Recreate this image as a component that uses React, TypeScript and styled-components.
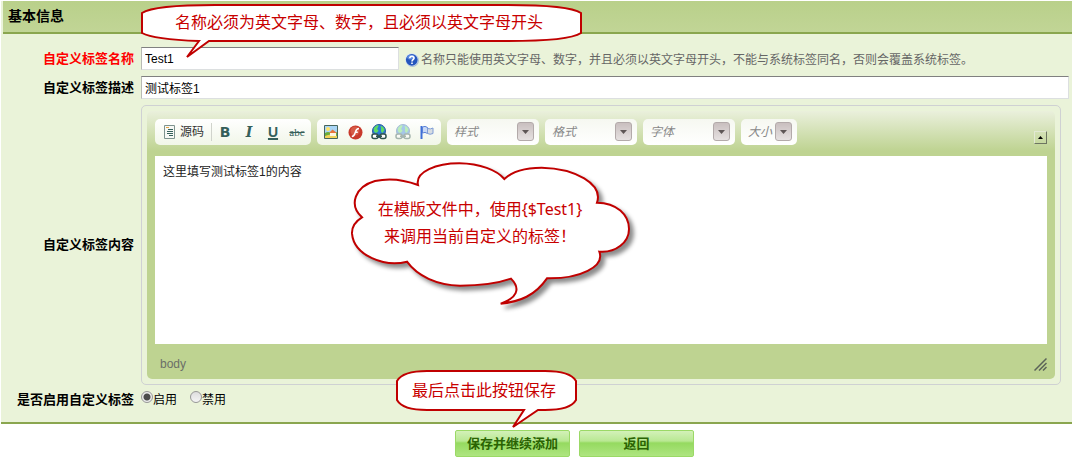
import React from 'react';
import styled, { createGlobalStyle, css } from 'styled-components';

const sans = '"Liberation Sans", "Noto Sans CJK SC", sans-serif';

const GlobalStyle = createGlobalStyle`
  * { box-sizing: border-box; }
  body { margin: 0; background: #fff; font: 12px/18px ${sans}; color: #000; }
  button, input, select, textarea { font: inherit; color: inherit; margin: 0; }
`;

const Page = styled.form`
  padding: 1px 0 7px 1px;
`;

const Panel = styled.section`
  background: #eaf3d9;
  border-bottom: 2px solid #8aa64f;
`;

const PanelHeader = styled.h1`
  margin: 0 0 0 2px;
  padding: 0 5px;
  font-size: 14px;
  line-height: 31px;
  background: linear-gradient(#b9d08a, #c1d596);
  border-bottom: 2px solid #8aa64f;
`;

const Fields = styled.div`
  display: grid;
  grid-template-columns: 133px minmax(0, 1fr);
  gap: 6px 7px;
  padding: 13px 3px 13px 0;
`;

const FieldName = styled.label<{ $required?: boolean }>`
  align-self: center;
  text-align: right;
  font-size: 13px;
  font-weight: bold;
  color: ${p => (p.$required ? '#f00' : '#000')};
`;

const NameCell = styled.div`
  position: relative;
  display: flex;
  align-items: center;
  gap: 6px;
`;

const TextInput = styled.input<{ $short?: boolean }>`
  width: ${p => (p.$short ? '258px' : '100%')};
  height: 23px;
  padding: 0 3px;
  background: #fff;
  border: 1px solid #dcdfe0;
  border-top-color: #808080;
  border-left-color: #b8bab4;
  outline: none;
`;

const Hint = styled.span`
  display: flex;
  align-items: center;
  gap: 2px;
  color: #666;
  padding-top: 2px;
`;

const Editor = styled.div`
  margin-right: 8px;
  padding: 5px;
  border: 1px solid #cfd1d3;
  border-radius: 5px;
`;

const EditorInner = styled.div`
  padding: 8px 8px 0;
  border-radius: 5px;
  background: linear-gradient(#eaf0dc, #bed391 40px);
`;

const Toolbar = styled.div`
  display: flex;
  gap: 6px;
  padding-bottom: 11px;
`;

const ToolGroup = styled.div`
  display: flex;
  align-items: center;
  height: 26px;
  padding: 0 2px;
  border-radius: 5px;
  background: linear-gradient(#fff, #f1f6e8);
`;

const toolLook = css`
  display: flex;
  align-items: center;
  justify-content: center;
  height: 24px;
  padding: 0;
  border: 0;
  background: none;
`;

const ToolButton = styled.button<{ $faded?: boolean }>`
  ${toolLook}
  width: 24px;
  opacity: ${p => (p.$faded ? 0.4 : 1)};
`;

const SourceButton = styled.button`
  ${toolLook}
  width: 54px;
  gap: 4px;
  color: #333;
`;

const Separator = styled.span`
  width: 1px;
  height: 18px;
  margin-right: 1px;
  background: #d0d3cc;
`;

const Letter = styled.span<{ $kind: 'bold' | 'italic' | 'underline' | 'strike' }>`
  color: #35605a;
  font-weight: bold;
  font-size: 14px;
  ${p => p.$kind === 'bold' && css`font-family: "DejaVu Sans", sans-serif;`}
  ${p => p.$kind === 'italic' && css`font-family: "DejaVu Serif", serif; font-style: italic;`}
  ${p => p.$kind === 'underline' && css`text-decoration: underline; text-decoration-thickness: 2px;`}
  ${p => p.$kind === 'strike' && css`
    font-family: "Liberation Serif", serif;
    font-size: 11px;
    font-weight: normal;
    text-decoration: line-through;
  `}
`;

const ComboFrame = styled.label<{ $narrow?: boolean }>`
  display: grid;
  align-items: center;
  width: ${p => (p.$narrow ? '56px' : '92px')};
  height: 26px;
  border-radius: 5px;
  background: linear-gradient(#f6f8f1, #fff);

  > * { grid-area: 1 / 1; }
`;

const ComboSelect = styled.select`
  appearance: none;
  width: 100%;
  height: 26px;
  padding: 0 0 0 7px;
  border: 0;
  background: none;
  color: #888;
  font-style: italic;
  outline: none;
`;

const ComboArrow = styled.span`
  display: flex;
  align-items: center;
  justify-content: center;
  justify-self: end;
  width: 17px;
  height: 19px;
  margin: 0 5px 1px 0;
  border: 1px solid #b3aaaa;
  border-radius: 3px;
  background: linear-gradient(#c9bfbf, #e6e1e1);
  pointer-events: none;
`;

const CollapseButton = styled.button`
  display: flex;
  align-items: center;
  justify-content: center;
  align-self: flex-end;
  width: 13px;
  height: 13px;
  margin: 0 0 1px auto;
  padding: 0;
  background: none;
  border: 1px solid #e2e9d3;
  border-right-color: #6d7561;
  border-bottom-color: #6d7561;
`;

const Canvas = styled.div`
  position: relative;
`;

const ContentArea = styled.textarea`
  display: block;
  width: 100%;
  height: 188px;
  padding: 7px 8px;
  border: 0;
  outline: none;
  resize: none;
  background: #fff;
  color: #222;
`;

const StatusBar = styled.div`
  display: flex;
  align-items: center;
  justify-content: space-between;
  height: 35px;
  padding: 5px 0 0 5px;
  color: #6b6f68;
`;

const Choices = styled.div`
  display: flex;
  gap: 13px;
  height: 18px;
`;

const Choice = styled.label`
  display: flex;
`;

const Radio = styled.input`
  appearance: none;
  width: 12px;
  height: 12px;
  border: 1px solid #979797;
  border-radius: 50%;
  background: linear-gradient(#dedede, #f4f4f4);

  &:checked {
    background: radial-gradient(circle, #4c4c4c 0 3px, #ececec 4px);
  }
`;

const Actions = styled.div`
  display: flex;
  justify-content: center;
  gap: 9px;
  padding: 6px 0 0 76px;
`;

const ActionSlot = styled.div`
  position: relative;
`;

const ActionButton = styled.button`
  width: 115px;
  height: 27px;
  padding: 0;
  font-size: 13px;
  font-weight: bold;
  color: #2a6303;
  border: 1px solid #9bd966;
  border-radius: 2px;
  background: linear-gradient(#d3f1b8 0, #b9e893 10px, #95da60 12px, #aee580 100%);
`;

const Callout = styled.div<{ $x: number; $y: number }>`
  position: absolute;
  z-index: 2;
  left: ${p => p.$x}px;
  top: ${p => p.$y}px;
  display: grid;
  pointer-events: none;
  color: #c80000;
  font: 16px/27px "Noto Sans", "Noto Sans CJK SC", sans-serif;
  white-space: nowrap;

  > * { grid-area: 1 / 1; }
  svg { overflow: visible; display: block; }
  path { fill: #fff; stroke: #c00000; }
`;

const CalloutText = styled.p<{ $height: number; $inset?: number }>`
  display: flex;
  align-items: center;
  justify-content: center;
  height: ${p => p.$height}px;
  margin: 0;
  padding-right: ${p => p.$inset ?? 4}px;
  z-index: 1;
  text-align: center;
`;

const Cloud = styled.svg`
  filter: drop-shadow(4px 4px 2px rgba(0, 0, 0, 0.45));
`;

const HelpIcon = () => (
  <svg width="14" height="14" viewBox="0 0 14 14">
    <circle cx="7.4" cy="7.4" r="6.5" fill="#a9bdd0" />
    <circle cx="6.7" cy="6.7" r="6.500" fill="#d5e3f3" />
    <circle cx="6.8" cy="6.8" r="5.900" fill="#2556bd" />
    <ellipse cx="6" cy="4.2" rx="3.8" ry="2.4" fill="#5b8ae0" />
    <path d="M4.8 5.2c0-2.6 4.4-2.5 4.2 0C8.900 6.700 7 6.700 7 8.400M7 9.500V11" fill="none" stroke="#fff" strokeWidth="1.600" />
  </svg>
);

const SourceIcon = () => (
  <svg width="12" height="14" viewBox="0 0 12 14">
    <path d="M.5.5h10v13H.5z" fill="#f6f8f5" stroke="#7e938e" />
    <path d="M2 2.500h3" stroke="#e5a442" />
    <path d="M4 4.500h5M3 6.500h6M3 8.500h6M5 10.500h4" stroke="#35605a" />
  </svg>
);

const ImageIcon = () => (
  <svg width="14" height="14" viewBox="0 0 14 14">
    <path d="M.5.5h13v13H.5z" fill="#a9d5f5" stroke="#47655c" />
    <circle cx="4" cy="4" r="2" fill="#ffe36a" />
    <path d="M1 8q3-2 6 0t6-1v6H1z" fill="#6aae3c" />
    <path d="M1 11q6-3 12 0v2H1z" fill="#f1d25a" />
    <path d="M6 8h6v3H6z" fill="#fff5df" />
    <path d="M5 8l3.500-3.500L13 8z" fill="#e8743a" />
  </svg>
);

const FlashIcon = () => (
  <svg width="15" height="15" viewBox="0 0 15 15">
    <circle cx="7.500" cy="7.500" r="7" fill="#c8392b" />
    <circle cx="7" cy="6" r="4.500" fill="#d65a45" />
    <path d="M11 3.500C8 3.500 7.800 6 7 8.200 6.400 10.200 5.500 11.300 3.800 11.500M7 7.300h2.800" fill="none" stroke="#fff" strokeWidth="1.500" />
  </svg>
);

const LinkIcon = () => (
  <svg width="16" height="16" viewBox="0 0 16 16">
    <circle cx="8" cy="7" r="6.500" fill="#2c7bd6" stroke="#2b5c9c" />
    <path d="M3 4q2-3 4.500-3 0 2-1 3T7 6 5 9Q2 8 3 4zM9.500 2q3 0 4 4l-2 3q-2-1-1.500-3T9.500 2z" fill="#5fdc62" />
    <rect x="1" y="10" width="6" height="4.500" rx="2" fill="#fff" stroke="#2f524d" strokeWidth="1.500" />
    <rect x="9" y="10" width="6" height="4.500" rx="2" fill="#fff" stroke="#2f524d" strokeWidth="1.500" />
    <path d="M5 12.200h6" stroke="#2f524d" strokeWidth="1.600" />
  </svg>
);

const FlagIcon = () => (
  <svg width="14" height="15" viewBox="0 0 14 15">
    <path d="M1.500 1v13" stroke="#3e6ed6" strokeWidth="2" />
    <path d="M2.500 2Q5 .5 7.500 2.500v6Q5 6.500 2.500 8z" fill="#c8d8f5" stroke="#5a82d8" />
    <path d="M7.500 3.500q3 1 5.500-.5v5.500q-3 1.500-5.500 0z" fill="#d7dde2" stroke="#7f9cd6" />
  </svg>
);

const DownTriangle = () => (
  <svg width="7" height="4" viewBox="0 0 7 4"><path d="M0 0h7L3.500 4z" fill="#5e5656" /></svg>
);

const Combo = ({ label, narrow }: { label: string; narrow?: boolean }) => (
  <ComboFrame $narrow={narrow}>
    <ComboSelect aria-label={label}>
      <option>{label}</option>
    </ComboSelect>
    <ComboArrow><DownTriangle /></ComboArrow>
  </ComboFrame>
);

export default function App() {
  return (
    <Page onSubmit={e => e.preventDefault()}>
      <GlobalStyle />
      <Panel>
        <PanelHeader>基本信息</PanelHeader>
        <Fields>
          <FieldName htmlFor="tag-name" $required>自定义标签名称</FieldName>
          <NameCell>
            <TextInput id="tag-name" $short defaultValue="Test1" />
            <Hint>
              <HelpIcon />
              名称只能使用英文字母、数字，并且必须以英文字母开头，不能与系统标签同名，否则会覆盖系统标签。
            </Hint>
            <Callout $x={0} $y={-43}>
              <svg width="440" height="54" viewBox="0 0 440 54">
                <path strokeWidth="2" d="M1 9C10 3 34 1 74 1H367C407 1 431 3 440 9V29C431 35 407 37 367 37H68L46 53L58 37C30 36 10 34 1 29Z" />
              </svg>
              <CalloutText $height={37}>名称必须为英文字母、数字，且必须以英文字母开头</CalloutText>
            </Callout>
          </NameCell>

          <FieldName htmlFor="tag-desc">自定义标签描述</FieldName>
          <TextInput id="tag-desc" defaultValue="测试标签1" />

          <FieldName htmlFor="tag-content">自定义标签内容</FieldName>
          <Editor>
            <EditorInner>
              <Toolbar>
                <ToolGroup>
                  <SourceButton type="button"><SourceIcon />源码</SourceButton>
                  <Separator />
                  <ToolButton type="button"><Letter $kind="bold">B</Letter></ToolButton>
                  <ToolButton type="button"><Letter $kind="italic">I</Letter></ToolButton>
                  <ToolButton type="button"><Letter $kind="underline">U</Letter></ToolButton>
                  <ToolButton type="button"><Letter $kind="strike">abc</Letter></ToolButton>
                </ToolGroup>
                <ToolGroup>
                  <ToolButton type="button" aria-label="图像"><ImageIcon /></ToolButton>
                  <ToolButton type="button" aria-label="Flash"><FlashIcon /></ToolButton>
                  <ToolButton type="button" aria-label="超链接"><LinkIcon /></ToolButton>
                  <ToolButton type="button" aria-label="取消超链接" $faded><LinkIcon /></ToolButton>
                  <ToolButton type="button" aria-label="锚点"><FlagIcon /></ToolButton>
                </ToolGroup>
                <Combo label="样式" />
                <Combo label="格式" />
                <Combo label="字体" />
                <Combo label="大小" narrow />
                <CollapseButton type="button" aria-label="折叠工具栏">
                  <svg width="5" height="3" viewBox="0 0 5 3"><path d="M0 3h5L2.500 0z" /></svg>
                </CollapseButton>
              </Toolbar>
              <Canvas>
                <ContentArea id="tag-content" defaultValue="这里填写测试标签1的内容" />
                <Callout $x={185} $y={-1}>
                  <Cloud width="300" height="160" viewBox="0 0 900 480">
                    <path strokeWidth="6" d="M66 187C25 150 45 95 105 78C150 68 200 77 234 90C225 50 290 25 358 25C420 26 470 45 493 72C520 46 565 38 605 38C705 40 790 87 771 143C830 143 867 180 867 222C867 262 828 294 778 290C795 335 720 372 621 370C585 422 540 440 482 446C528 430 545 403 513 371C470 386 415 392 360 392C290 390 232 363 201 320C135 337 42 303 36 236C35 214 48 198 66 187Z" />
                  </Cloud>
                  <CalloutText $height={136} $inset={20}>
                    <span>在模版文件中，使用{'{$Test1}'}<br />来调用当前自定义的标签！</span>
                  </CalloutText>
                </Callout>
              </Canvas>
              <StatusBar>
                body
                <svg width="13" height="13" viewBox="0 0 13 13">
                  <path d="M.5 12.500l12-12M5 12.500L12.500 5M9 12.500L12.500 9" stroke="#5b6358" strokeWidth="1.500" />
                </svg>
              </StatusBar>
            </EditorInner>
          </Editor>

          <FieldName as="span" id="enable-name">是否启用自定义标签</FieldName>
          <Choices role="radiogroup" aria-labelledby="enable-name">
            <Choice><Radio type="radio" name="enabled" defaultChecked />启用</Choice>
            <Choice><Radio type="radio" name="enabled" />禁用</Choice>
          </Choices>
        </Fields>
      </Panel>
      <Actions>
        <ActionSlot>
          <ActionButton type="submit">保存并继续添加</ActionButton>
          <Callout $x={-60} $y={-60}>
            <svg width="182" height="59" viewBox="0 0 182 59">
              <path strokeWidth="2" d="M2 11C6 4 16 1 32 1H150C166 1 177 4 181 11V30C177 37 166 40 150 40H143L118 57L129 40H32C16 40 6 37 2 30Z" />
            </svg>
            <CalloutText $height={41}>最后点击此按钮保存</CalloutText>
          </Callout>
        </ActionSlot>
        <ActionButton type="button">返回</ActionButton>
      </Actions>
    </Page>
  );
}
